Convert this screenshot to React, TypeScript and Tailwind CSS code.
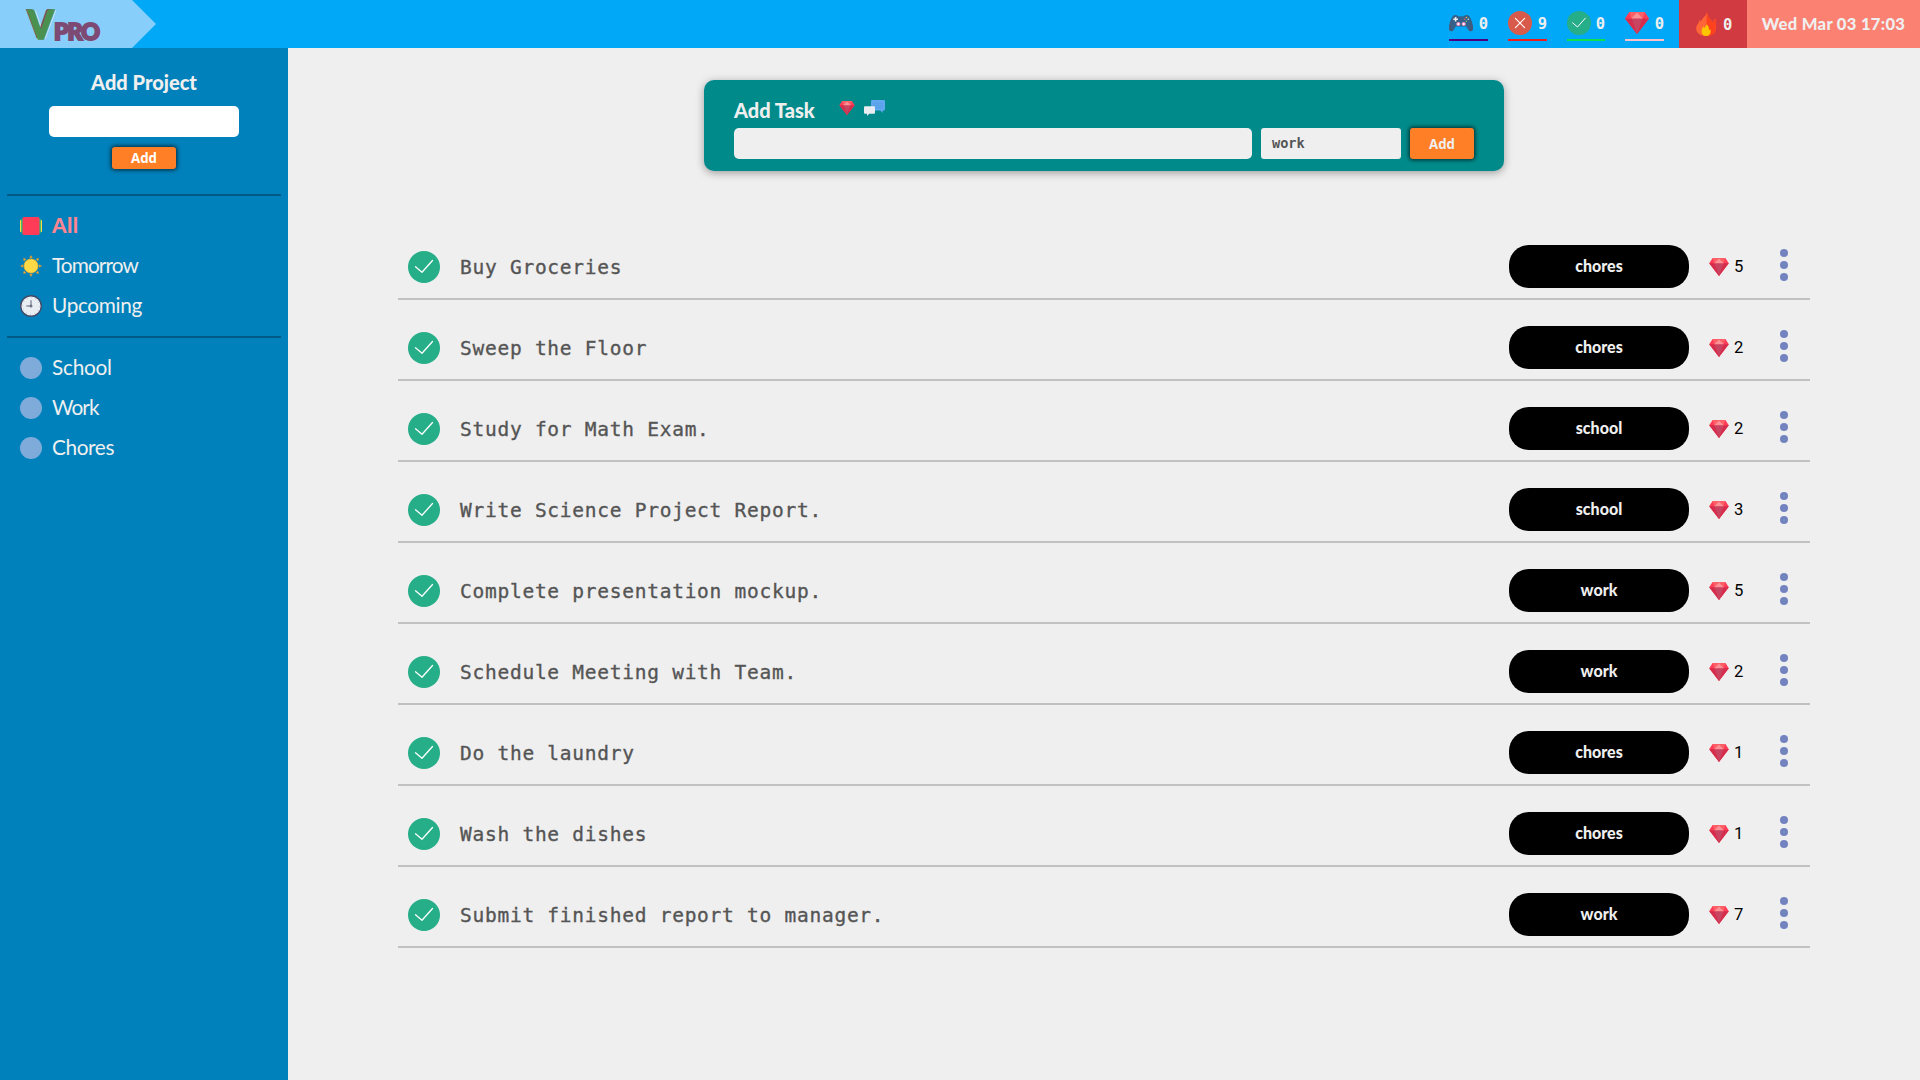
import React from "react";

const tasks = [
  { title: "Buy Groceries", project: "chores", gems: 5 },
  { title: "Sweep the Floor", project: "chores", gems: 2 },
  { title: "Study for Math Exam.", project: "school", gems: 2 },
  { title: "Write Science Project Report.", project: "school", gems: 3 },
  { title: "Complete presentation mockup.", project: "work", gems: 5 },
  { title: "Schedule Meeting with Team.", project: "work", gems: 2 },
  { title: "Do the laundry", project: "chores", gems: 1 },
  { title: "Wash the dishes", project: "chores", gems: 1 },
  { title: "Submit finished report to manager.", project: "work", gems: 7 },
];

type IconProps = { className?: string };

function Gem({ className }: IconProps) {
  return (
    <svg viewBox="0 0 24 22" className={className}>
      <path d="M4.2 0h15.6L24 6.5 12 22 0 6.5z" fill="#ff3d57" />
      <path d="M0 6.5h24L12 22z" fill="#d52d4b" />
      <path d="M6.5 6.5h11L12 22z" fill="#c94460" />
      <path d="M4.2 0h15.6l-2.3 6.5L12 .8 6.5 6.5z" fill="#fd5f67" />
      <path d="M12 .6l5.8 5.9H6.2z" fill="#fb9295" />
    </svg>
  );
}

function Check({ className }: IconProps) {
  return (
    <svg viewBox="0 0 32 32" className={className}>
      <circle cx="16" cy="16" r="16" fill="#26ae88" />
      <path d="M7.5 15.8l6.500 5.500L24.5 9.500" fill="none" stroke="#fff" strokeWidth="1.300" strokeLinecap="round" strokeLinejoin="round" />
    </svg>
  );
}

function Cross({ className }: IconProps) {
  return (
    <svg viewBox="0 0 24 24" className={className}>
      <circle cx="12" cy="12" r="12" fill="#d75a4a" />
      <path d="M7.4 7.4l9.2 9.2M16.6 7.4l-9.2 9.2" stroke="#fff" strokeWidth="1.1" strokeLinecap="round" />
    </svg>
  );
}

function Gamepad({ className }: IconProps) {
  return (
    <svg viewBox="0 0 24 24" className={className}>
      <path d="M4 5c1.2-1.4 3.8-1.3 5 .3h6C16.200 3.700 18.800 3.600 20 5c1.800 1.300 4 8.500 4 12.500 0 3-3.500 3.500-4.800 1.200L17.300 15.500H6.700l-1.900 3.200C3.500 21 0 20.500 0 17.500 0 13.500 2.200 6.300 4 5z" fill="#35618a" />
      <path d="M3.300 6.500C1.600 9.500 0 14 0 17.500c0 2.500 2.400 3.300 3.900 2.200C2 17 2 10 3.300 6.500zM20.700 6.500c1.700 3 3.300 7.500 3.300 11 0 2.500-2.400 3.300-3.900 2.200C22 17 22 10 20.700 6.500z" fill="#46587a" />
      <path d="M6.600 6v4.600M4.300 8.300h4.600" stroke="#eee" strokeWidth="1.6" />
      <circle cx="9.300" cy="13" r="2.100" fill="#ef8fbd" />
      <circle cx="9.300" cy="13" r="1" fill="#fff" />
      <circle cx="14.700" cy="13" r="2.100" fill="#ef8fbd" />
      <circle cx="14.700" cy="13" r="1" fill="#fff" />
      <circle cx="17.400" cy="6.500" r=".8" fill="#efb832" />
      <circle cx="17.400" cy="10.200" r=".8" fill="#70c968" />
      <circle cx="15.600" cy="8.300" r=".8" fill="#eb6060" />
      <circle cx="19.300" cy="8.300" r=".8" fill="#d3e8fa" />
    </svg>
  );
}

function Flame({ className }: IconProps) {
  return (
    <svg viewBox="0 0 20 24" className={className}>
      <path d="M11 0c-.4 4-5.500 6.400-6 9.800-.3-.8-.8-1.600-1.600-2.100C3.500 11 .2 12.600.2 16.300.2 21 4 24 10.200 24c6 0 9.600-3.300 9.600-8.100 0-3.200-.8-6.200-.3-9.200-1.700.8-2.800 2.300-2.900 4.300-.8-.5-1.300-1.600-1.400-2.700C12.600 6 11.200 3.200 11 0z" fill="#ff6536" />
      <path d="M19.500 6.700c-1.700.8-2.800 2.300-2.900 4.300-.8-.5-1.300-1.600-1.400-2.700C12.600 6 11.200 3.200 11 0c-.2 1-.5 8-.5 24 6 0 9.300-3.300 9.300-8.100 0-3.200-.8-6.200-.3-9.200z" fill="#ff421d" />
      <path d="M10.500 12.300c0 1.600-1.300 2.500-1.900 3.600-.6-.4-.9-.9-1-1.600-1.300 1.500-2 3.200-2 5C5.600 22.300 7.300 24 10 24s4.700-1.700 4.700-4.700c0-.8-.2-1.600-.5-2.400-.4.500-.7.900-1.200 1.100.1-2.400-.7-4.400-2.500-5.700z" fill="#ffc400" />
    </svg>
  );
}

function Chat({ className }: IconProps) {
  return (
    <svg viewBox="0 0 21 16" className={className}>
      <path d="M8 0h12a1 1 0 011 1v8.600a1 1 0 01-1 1h-1.300V13l-2.400-2.400H8a1 1 0 01-1-1V1a1 1 0 011-1z" fill="#61a8f0" />
      <path d="M9 3.200h10M9 5.400h10M9 7.600h10" stroke="#4f97e3" strokeWidth=".6" />
      <path d="M1 6.200h9a1 1 0 011 1v5.600a1 1 0 01-1 1H5.200L3 16v-2.200H1a1 1 0 01-1-1V7.200a1 1 0 011-1z" fill="#e9edf2" />
    </svg>
  );
}

function AllIcon() {
  return (
    <svg viewBox="0 0 22 18" className="h-[18px] w-[22px]">
      <rect x="0" y="3" width="2" height="12" rx=".7" fill="#ffda44" />
      <rect x="20" y="3" width="2" height="12" rx=".7" fill="#ffda44" />
      <rect x="1.200" y="1.500" width="19.600" height="15" rx="1" fill="#17b978" />
      <rect x="2.500" y="0" width="17" height="18" rx="1.500" fill="#ff3c57" />
    </svg>
  );
}

function SunIcon() {
  return (
    <svg viewBox="0 0 22 22" className="size-[22px]">
      <circle cx="11" cy="11" r="7" fill="#ffda44" stroke="#f7b52b" strokeWidth=".7" />
      <path
        d="M11 .5l1.300 2.300H9.700zM11 21.500l1.300-2.300H9.700zM.5 11l2.300-1.300v2.600zM21.500 11l-2.300-1.300v2.600zM3.500 3.500l2.400.5L4 5.900zM18.500 3.500l-2.400.5L18 5.900zM3.500 18.500l2.400-.5L4 16.100zM18.500 18.500l-2.400-.5L18 16.100z"
        fill="#f7a428"
        stroke="#f7a428"
        strokeWidth=".4"
      />
    </svg>
  );
}

function ClockIcon() {
  return (
    <svg viewBox="0 0 22 22" className="size-[22px]">
      <circle cx="11" cy="11" r="10.300" fill="#e9eef2" stroke="#444b68" strokeWidth="1.400" />
      <circle cx="11" cy="11" r="8.300" fill="none" stroke="#a5afc0" strokeWidth=".9" strokeDasharray=".7 3.646" />
      <path d="M11 11V5.200M11 11H6.300" stroke="#5d6478" strokeWidth="1" />
      <circle cx="11" cy="11" r="1.500" fill="#6c7386" />
    </svg>
  );
}

function ProjectDot() {
  return <span className="size-[22px] rounded-full bg-[#7fabda]" />;
}

function Stat({ icon, value, line }: { icon: React.ReactNode; value: number; line: string }) {
  return (
    <div className={`flex h-[41px] items-center justify-between border-b-2 pt-[7px] ${line}`}>
      {icon}
      <span className="pt-px font-['DejaVu_Sans_Mono',monospace] text-[15.500px] font-bold leading-5 text-[#efefef]">{value}</span>
    </div>
  );
}

function NavItem({
  icon,
  label,
  tone = "text-[#efefef]",
}: {
  icon: React.ReactNode;
  label: string;
  tone?: string;
}) {
  return (
    <li className="flex h-10 items-center gap-2.5 pl-5">
      <span className="flex w-[22px] justify-center">{icon}</span>
      <span className={`-mt-[2px] text-[20.800px] leading-6 ${tone}`}>{label}</span>
    </li>
  );
}

export default function App() {
  return (
    <div className="flex h-screen w-full flex-col overflow-hidden bg-[#efefef] font-[Lato,sans-serif]">
      <header className="flex h-12 shrink-0 justify-between bg-[#00a8f7]">
        <div className="flex h-12">
          <div className="flex h-12 w-[132px] items-start bg-[#87cefa] pl-[28px]">
            <span className="w-[26px] shrink-0">
              <span className="inline-block origin-left scale-x-[0.92] text-[40px] font-black leading-[48px] text-[#4a9150] [-webkit-text-stroke:1.500px_#4a9150] [text-shadow:-2px_-1px_0_#77406a,2px_0_0_#d7e8dc]">
                V
              </span>
            </span>
            <span className="pt-[17px] text-[23px] font-black leading-[28px] tracking-[-0.900px] text-[#7c4a73] [-webkit-text-stroke:2px_#7c4a73] [text-shadow:1px_1px_0_#b9a9c9]">
              PRO
            </span>
          </div>
          <div className="w-6 bg-[#87cefa] [clip-path:polygon(0_0,100%_50%,0_100%)]" />
        </div>
        <div className="flex">
          <div className="mr-[15px] flex gap-5">
            <Stat icon={<Gamepad className="size-6" />} value={0} line="w-[39px] border-[#4b0082]" />
            <Stat icon={<Cross className="size-6" />} value={9} line="w-[39px] border-[#f01c1c]" />
            <Stat icon={<Check className="size-6" />} value={0} line="w-[38px] border-[#0be04f]" />
            <Stat icon={<Gem className="h-[22px] w-6" />} value={0} line="w-[39px] border-[#ffc0cb]" />
          </div>
          <div className="flex w-[68px] items-center bg-[#d03a40] pl-[17px]">
            <Flame className="h-6 w-5" />
            <span className="ml-[7px] pt-px font-['DejaVu_Sans_Mono',monospace] text-[15.500px] font-bold leading-5 text-[#efefef]">0</span>
          </div>
          <div className="flex w-[173px] items-center justify-center bg-[#fb8173] text-[16.600px] font-black tracking-[0.300px] text-[#efefef]">
            <span className="whitespace-nowrap">Wed Mar 03 17:03</span>
          </div>
        </div>
      </header>

      <div className="flex min-h-0 flex-1">
        <aside className="w-72 shrink-0 bg-[#0081bb]">
          <form className="flex h-[146px] flex-col items-center pt-[22px]">
            <label className="text-[20px] font-black leading-6 text-[#efefef]">Add Project</label>
            <div className="mt-3 h-[31px] w-[190px] rounded-[5px] bg-white" />
            <button type="button" className="mt-[10px] h-[22px] w-16 rounded-[3px] bg-[#ff7f27] font-['Open_Sans',sans-serif] text-[13.300px] font-bold leading-[22px] text-white shadow-[0_0_4px_1px_rgba(0,0,0,0.7)]">
              Add
            </button>
          </form>
          <hr className="mx-[7px] border-t-2 border-[#005a83]" />
          <ul className="pt-[10px]">
            <NavItem icon={<AllIcon />} label="All" tone="font-black tracking-[0.400px] text-[#ff8591]" />
            <NavItem icon={<SunIcon />} label="Tomorrow" tone="tracking-[-0.900px] text-[#efefef]" />
            <NavItem icon={<ClockIcon />} label="Upcoming" tone="tracking-[-0.350px] text-[#efefef]" />
          </ul>
          <hr className="mx-[7px] mt-[10px] border-t-2 border-[#005a83]" />
          <ul className="pt-[10px]">
            <NavItem icon={<ProjectDot />} label="School" tone="tracking-[-0.250px] text-[#efefef]" />
            <NavItem icon={<ProjectDot />} label="Work" tone="tracking-[-0.900px] text-[#efefef]" />
            <NavItem icon={<ProjectDot />} label="Chores" tone="tracking-[-0.400px] text-[#efefef]" />
          </ul>
        </aside>

        <main className="flex flex-1 flex-col items-center pt-8">
          <form className="h-[91px] w-[800px] rounded-[10px] bg-[#008b8a] px-[30px] pt-[19px] shadow-[0_2px_8px_rgba(0,0,0,0.35)]">
            <div className="flex h-[29px]">
              <span className="-mt-px w-[105px] text-[20px] font-black leading-6 text-[#efefef]">Add Task</span>
              <Gem className="mt-[2px] h-[14px] w-4" />
              <Chat className="ml-[9px] mt-px h-4 w-[21px]" />
            </div>
            <div className="flex h-[31px] gap-[9px]">
              <div className="w-[518px] rounded-[5px] bg-[#efefef]" />
              <div className="w-[140px] rounded-[3px] bg-[#efefef] pl-[11px] font-['DejaVu_Sans_Mono',monospace] text-[13.600px] font-bold leading-[31px] text-[#555]">
                work
              </div>
              <button type="button" className="w-16 rounded-[3px] bg-[#ff7f27] pt-[2px] font-['Open_Sans',sans-serif] text-[13.300px] font-bold text-[#efefef] shadow-[0_0_4px_1px_rgba(0,0,0,0.7)]">
                Add
              </button>
            </div>
          </form>

          <ul className="mt-12 w-[1412px]">
            {tasks.map((task) => (
              <li key={task.title} className="flex h-[81px] items-center border-b-2 border-[#c1c1c1] pl-[10px] pt-[16px]">
                <Check className="size-8" />
                <span className="ml-5 flex-1 pt-[2px] font-['DejaVu_Sans_Mono',monospace] text-[19.500px] leading-8 tracking-[0.740px] text-[#555] [-webkit-text-stroke:0.350px_#555]">
                  {task.title}
                </span>
                <span className="flex h-[43px] w-[180px] items-center justify-center rounded-[20px] bg-black pb-px text-[16px] font-black text-[#efefef]">
                  {task.project}
                </span>
                <Gem className="ml-5 h-[18px] w-5" />
                <span className="ml-[5px] w-[46px] font-[Roboto,sans-serif] text-[16.600px] leading-6 text-black">{task.gems}</span>
                <span className="-mt-[3px] mr-[22px] flex flex-col gap-1">
                  <span className="size-2 rounded-full bg-[#7383bf]" />
                  <span className="size-2 rounded-full bg-[#7383bf]" />
                  <span className="size-2 rounded-full bg-[#7383bf]" />
                </span>
              </li>
            ))}
          </ul>
        </main>
      </div>
    </div>
  );
}
